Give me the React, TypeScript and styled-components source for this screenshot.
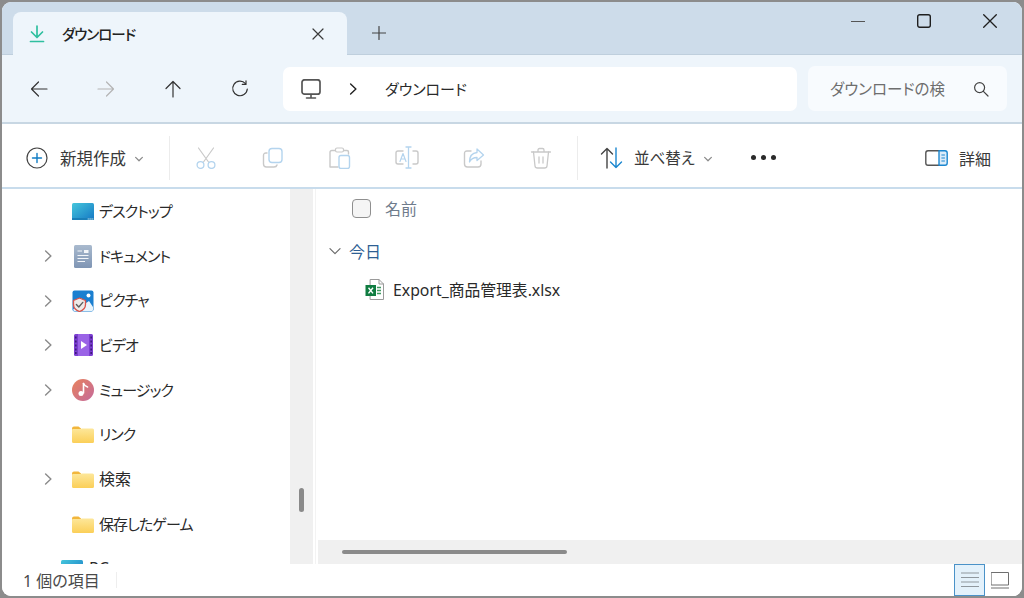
import styled, { createGlobalStyle } from "styled-components";
import { ReactNode } from "react";

const GlobalStyle = createGlobalStyle`
  html, body {
    margin: 0;
    padding: 0;
    background: #8c8c8c;
  }
  body {
    font-family: "Noto Sans", "Noto Sans CJK JP", sans-serif;
    font-feature-settings: "palt";
    color: #1f1f1f;
  }
`;

const BLUE = "#b4d4ee";
const GREY = "#c9c9c9";

const Icon = ({ size = 20, w, h, children }: { size?: number; w?: number; h?: number; children: ReactNode }) => (
  <svg
    width={w ?? size}
    height={h ?? size}
    viewBox={`0 0 ${w ?? size} ${h ?? size}`}
    fill="none"
    strokeLinecap="round"
    strokeLinejoin="round"
    style={{ display: "block", flex: "none" }}
  >
    {children}
  </svg>
);

const Chevron = ({ dir = "right", size = 12, color = "#8a8a8a" }: { dir?: "right" | "down"; size?: number; color?: string }) => (
  <Icon size={size}>
    {dir === "right" ? (
      <path d={`M${size * 0.3} ${size * 0.08}L${size * 0.74} ${size * 0.5}L${size * 0.3} ${size * 0.92}`} stroke={color} strokeWidth="1.4" />
    ) : (
      <path d={`M${size * 0.08} ${size * 0.3}L${size * 0.5} ${size * 0.72}L${size * 0.92} ${size * 0.3}`} stroke={color} strokeWidth="1.2" />
    )}
  </Icon>
);

const FolderIcon = () => (
  <Icon w={22} h={17}>
    <path d="M0 2.5Q0 0.5 2 0.5H6.5L9 2.5V5H0Z" fill="#f2b63c" />
    <path d="M0 4Q0 3 1 3H8.5L10 2.5H20.5Q22 2.5 22 4V15.5Q22 17 20.5 17H1.5Q0 17 0 15.5Z" fill="url(#folderFill)" />
  </Icon>
);

const DesktopIcon = () => (
  <Icon w={22} h={17}>
    <rect width="22" height="17" rx="1.5" fill="url(#desktopFill)" />
    <rect y="15" width="22" height="2" fill="#1a7fb8" />
    <path d="M16 16h1M18 16h1M20 16h1" stroke="#d9f0fa" strokeWidth="0.8" />
  </Icon>
);

const DocumentIcon = () => (
  <Icon w={18} h={23}>
    <rect width="18" height="23" rx="1.5" fill="url(#docFill)" />
    <path d="M3.5 10.5H14.5M3.5 13.5H14.5M3.5 16.5H11" stroke="#f2f5f9" strokeWidth="1" strokeLinecap="butt" />
    <rect x="10" y="5" width="4.5" height="3" fill="#f2f5f9" />
    <path d="M3.5 6H8" stroke="#f2f5f9" strokeWidth="1" strokeLinecap="butt" />
  </Icon>
);

const PictureIcon = () => (
  <Icon size={22}>
    <rect width="21" height="21" x="0.5" y="0.5" rx="2" fill="#1b7fd0" />
    <path d="M1 20L9 8L14 13L17 11L21 17V20Q21 21 20 21H2Z" fill="#e8f4fc" />
    <circle cx="16.5" cy="5.5" r="2" fill="#fff" />
    <path d="M1.5 10.5L7.5 8L13.500 10.5V14.500Q13.500 19.500 7.500 21.500Q1.500 19.500 1.500 14.500Z" fill="#eeeae8" stroke="#d9534a" strokeWidth="1.300" />
    <path d="M4.4 14.600L6.800 17L10.800 12.400" stroke="#5d5d5d" strokeWidth="1.400" />
  </Icon>
);

const VideoIcon = () => (
  <Icon w={19} h={22}>
    <rect width="19" height="22" rx="1.5" fill="#7b3ed0" />
    <rect x="4" y="0" width="11" height="22" fill="#9a63e6" />
    <path d="M1 3.5h1.6M1 7.5h1.6M1 11.5h1.6M1 15.5h1.6M1 19h1.6M16.4 3.5h1.6M16.4 7.5h1.6M16.4 11.5h1.6M16.4 15.5h1.6M16.4 19h1.6" stroke="#3e1a7c" strokeWidth="1.8" strokeLinecap="butt" />
    <path d="M7 7L13 11L7 15Z" fill="#fff" />
  </Icon>
);

const MusicIcon = () => (
  <Icon size={22}>
    <circle cx="11" cy="11" r="11" fill="url(#musicFill)" />
    <path d="M11.5 4.5V14" stroke="#fff" strokeWidth="1.6" />
    <path d="M11.5 4.5Q13 7.5 15.5 8" stroke="#fff" strokeWidth="1.6" />
    <circle cx="9" cy="14.5" r="2.5" fill="#fff" />
  </Icon>
);

const ExcelIcon = () => (
  <Icon w={20} h={21}>
    <path d="M5.5 0.5H14L18.5 5V20.5H5.5Z" fill="#fff" stroke="#9a9a9a" strokeWidth="1" />
    <path d="M14 0.5V5H18.5" stroke="#9a9a9a" strokeWidth="1" />
    <path d="M12 8.5h4M12 11.5h4M12 14.5h4" stroke="#3f9a62" strokeWidth="1.7" strokeLinecap="butt" />
    <rect x="0.5" y="6" width="10.5" height="11" fill="#107c41" />
    <path d="M3.5 8.8L8 14.4M8 8.8L3.5 14.4" stroke="#fff" strokeWidth="1.4" strokeLinecap="butt" />
  </Icon>
);

const places = [
  { label: "デスクトップ", icon: <DesktopIcon /> },
  { label: "ドキュメント", icon: <DocumentIcon />, expand: true },
  { label: "ピクチャ", icon: <PictureIcon />, expand: true },
  { label: "ビデオ", icon: <VideoIcon />, expand: true },
  { label: "ミュージック", icon: <MusicIcon />, expand: true },
  { label: "リンク", icon: <FolderIcon /> },
  { label: "検索", icon: <FolderIcon />, expand: true, kanji: true },
  { label: "保存したゲーム", icon: <FolderIcon /> },
];

export default function App() {
  return (
    <>
      <GlobalStyle />
      <svg width="0" height="0" style={{ position: "absolute" }}>
        <defs>
          <linearGradient id="folderFill" x1="0" y1="0" x2="0" y2="1">
            <stop offset="0" stopColor="#fde79a" />
            <stop offset="1" stopColor="#fbcf58" />
          </linearGradient>
          <linearGradient id="desktopFill" x1="0" y1="0" x2="1" y2="1">
            <stop offset="0" stopColor="#45c6dc" />
            <stop offset="1" stopColor="#1578c4" />
          </linearGradient>
          <linearGradient id="docFill" x1="0" y1="0" x2="0" y2="1">
            <stop offset="0" stopColor="#a9bace" />
            <stop offset="1" stopColor="#7f95b4" />
          </linearGradient>
          <linearGradient id="musicFill" x1="0" y1="0" x2="1" y2="1">
            <stop offset="0" stopColor="#e8825c" />
            <stop offset="1" stopColor="#c46a9c" />
          </linearGradient>
        </defs>
      </svg>
      <Window>
        <TitleBar>
          <Tab>
            <TabIcon>
              <Icon size={18}>
                <path d="M9 1V12M3.5 7L9 12.5L14.5 7" stroke="#2fbf9f" strokeWidth="1.7" />
                <path d="M2.5 16.5H15.5" stroke="#2fbf9f" strokeWidth="1.7" />
              </Icon>
            </TabIcon>
            <TabLabel>ダウンロード</TabLabel>
            <TabClose>
              <Icon size={12}>
                <path d="M1 1L11 11M11 1L1 11" stroke="#3a3a3a" strokeWidth="1.2" />
              </Icon>
            </TabClose>
          </Tab>
          <NewTab>
            <Icon size={14}>
              <path d="M7 .5V13.5M.5 7H13.5" stroke="#444" strokeWidth="1.2" />
            </Icon>
          </NewTab>
          <WindowControls>
            <WindowButton>
              <Icon size={14}>
                <path d="M.5 7.5H13.5" stroke="#555" strokeWidth="1.2" />
              </Icon>
            </WindowButton>
            <WindowButton>
              <Icon size={14}>
                <rect x=".7" y=".7" width="12.6" height="12.6" rx="2" stroke="#1f1f1f" strokeWidth="1.4" />
              </Icon>
            </WindowButton>
            <WindowButton>
              <Icon size={14}>
                <path d="M.7 .7L13.3 13.3M13.3 .7L.7 13.3" stroke="#1f1f1f" strokeWidth="1.3" />
              </Icon>
            </WindowButton>
          </WindowControls>
        </TitleBar>

        <NavBar>
          <NavButton>
            <Icon size={18}>
              <path d="M17 9H1.5M8.5 2L1.5 9L8.5 16" stroke="#333" strokeWidth="1.2" />
            </Icon>
          </NavButton>
          <NavButton>
            <Icon size={18}>
              <path d="M1 9H16.5M9.5 2L16.5 9L9.5 16" stroke="#b4b4b4" strokeWidth="1.2" />
            </Icon>
          </NavButton>
          <NavButton>
            <Icon size={18}>
              <path d="M9 17V1.5M2 8.5L9 1.5L16 8.5" stroke="#333" strokeWidth="1.2" />
            </Icon>
          </NavButton>
          <NavButton>
            <Icon size={18}>
              <path d="M14.5 3.6A7.3 7.3 0 1 0 16.3 9" stroke="#333" strokeWidth="1.2" />
              <path d="M15 .8V4.4H11.3" stroke="#333" strokeWidth="1.2" />
            </Icon>
          </NavButton>
          <AddressBox>
            <Icon w={20} h={20}>
              <rect x="1" y=".8" width="18" height="14.4" rx="2.5" stroke="#555" strokeWidth="1.7" />
              <path d="M10 15.5V18.5M5.500 19H14.500" stroke="#555" strokeWidth="1.6" />
            </Icon>
            <AddressChevron>
              <Chevron size={12} color="#222" />
            </AddressChevron>
            <AddressText>ダウンロード</AddressText>
          </AddressBox>
          <SearchBox>
            <SearchText>ダウンロードの検</SearchText>
            <Icon size={16}>
              <circle cx="6.6" cy="6.6" r="5" stroke="#444" strokeWidth="1.2" />
              <path d="M10.4 10.4L15 15" stroke="#444" strokeWidth="1.2" />
            </Icon>
          </SearchBox>
        </NavBar>

        <Toolbar>
          <NewButton>
            <Icon size={22}>
              <circle cx="11" cy="11" r="10" stroke="#444" strokeWidth="1.2" />
              <path d="M11 6.5V15.5M6.5 11H15.5" stroke="#0f7cc4" strokeWidth="1.4" />
            </Icon>
            <ToolLabel $size={16.5} $gap={12}>新規作成</ToolLabel>
            <MenuChevron>
              <Chevron dir="down" size={8} color="#8a8a8a" />
            </MenuChevron>
          </NewButton>
          <ToolDivider />
          <ToolIconButton>
            <Icon size={22}>
              <path d="M3.5 1L13.5 15M18.5 1L8.5 15" stroke={GREY} strokeWidth="1.2" />
              <circle cx="5.5" cy="18" r="3.4" stroke={BLUE} strokeWidth="1.3" />
              <circle cx="16.5" cy="18" r="3.4" stroke={BLUE} strokeWidth="1.3" />
            </Icon>
          </ToolIconButton>
          <ToolIconButton>
            <Icon size={22}>
              <path d="M5 6H4Q1.5 6 1.5 8.5V17Q1.5 20 4.5 20H12Q14.5 20 15 18" stroke={GREY} strokeWidth="1.4" />
              <rect x="7" y="1.5" width="13" height="14" rx="3" stroke={BLUE} strokeWidth="1.4" />
            </Icon>
          </ToolIconButton>
          <ToolIconButton>
            <Icon size={22}>
              <path d="M6 3.5H3Q1 3.5 1 5.5V20H9" stroke={GREY} strokeWidth="1.4" />
              <path d="M15 3.5H18Q19.5 3.5 19.5 5V7" stroke={GREY} strokeWidth="1.4" />
              <rect x="6.5" y="1" width="8" height="4" rx="1.5" stroke={GREY} strokeWidth="1.2" />
              <rect x="10" y="8.5" width="10.5" height="13" rx="2" stroke={BLUE} strokeWidth="1.4" />
            </Icon>
          </ToolIconButton>
          <ToolIconButton>
            <Icon size={24}>
              <path d="M8 5H3Q1 5 1 7V16Q1 18 3 18H8M18 5H21Q23 5 23 7V16Q23 18 21 18H18" stroke={GREY} strokeWidth="1.4" />
              <path d="M13.5 1V22M11 1H16M11 22H16" stroke={BLUE} strokeWidth="1.3" />
              <path d="M5 15.5L8 7.5L11 15.5M6 13H10" stroke={BLUE} strokeWidth="1.2" />
            </Icon>
          </ToolIconButton>
          <ToolIconButton>
            <Icon size={22}>
              <path d="M8 4H4Q1.5 4 1.5 6.5V17Q1.5 20 4.5 20H15Q18 20 18 17V14" stroke={GREY} strokeWidth="1.4" />
              <path d="M14 2L20.5 8L14 13.5V10.5C10 10.5 8 12 6.5 15C6.5 10 9 6 14 5.5Z" stroke={BLUE} strokeWidth="1.3" />
            </Icon>
          </ToolIconButton>
          <ToolIconButton>
            <Icon size={22}>
              <path d="M1.5 5H20.5M8 5V3Q8 1.5 9.5 1.5H12.5Q14 1.5 14 3V5" stroke={GREY} strokeWidth="1.3" />
              <path d="M3.5 5L5 19Q5.2 21 7.5 21H14.5Q16.8 21 17 19L18.5 5" stroke={GREY} strokeWidth="1.3" />
              <path d="M9 10V16M13 10V16" stroke={GREY} strokeWidth="1.3" />
            </Icon>
          </ToolIconButton>
          <ToolDivider $before={3} />
          <SortButton>
            <Icon size={24}>
              <path d="M7 22V2.5M1.5 8L7 2.5L12.5 8" stroke="#444" strokeWidth="1.4" />
              <path d="M16 2V21.5M10.5 16L16 21.5L21.5 16" stroke="#1a86cf" strokeWidth="1.4" />
            </Icon>
            <ToolLabel $gap={10}>並べ替え</ToolLabel>
            <MenuChevron>
              <Chevron dir="down" size={8} color="#8a8a8a" />
            </MenuChevron>
          </SortButton>
          <MoreDots>
            <Dot />
            <Dot />
            <Dot />
          </MoreDots>
          <DetailsButton>
            <Icon w={23} h={16}>
              <path d="M14 .8H3Q.8 .8 .8 3V13Q.8 15.200 3 15.200H14" stroke="#555" strokeWidth="1.4" />
              <path d="M14 .8H20Q22.200 .8 22.200 3V13Q22.200 15.200 20 15.200H14Z" fill="#dcecf9" stroke="#1a86cf" strokeWidth="1.4" />
              <path d="M16.800 5H19.500M16.800 8H19.500M16.800 11H19.500" stroke="#1a86cf" strokeWidth="1" />
            </Icon>
            <ToolLabel $size={16} $gap={11}>詳細</ToolLabel>
          </DetailsButton>
        </Toolbar>

        <Body>
          <Sidebar>
            {places.map((p) => (
              <TreeRow key={p.label}>
                <TreeChevron>{p.expand && <Chevron size={12} />}</TreeChevron>
                <TreeIcon>{p.icon}</TreeIcon>
                <TreeLabel $kanji={p.kanji}>{p.label}</TreeLabel>
              </TreeRow>
            ))}
            <PcRow>
              <DesktopIcon />
              <TreeLabel $kanji>PC</TreeLabel>
            </PcRow>
          </Sidebar>
          <ScrollTrack>
            <ScrollThumb />
          </ScrollTrack>
          <TrackEdge />
          <Main>
            <FileArea>
              <HeaderRow>
                <CheckBox />
                <HeaderLabel>名前</HeaderLabel>
              </HeaderRow>
              <GroupRow>
                <Chevron dir="down" size={12} color="#6b6b6b" />
                <GroupLabel>今日</GroupLabel>
              </GroupRow>
              <FileRow>
                <ExcelIcon />
                <FileName>Export_商品管理表.xlsx</FileName>
              </FileRow>
            </FileArea>
            <HScroll>
              <HThumb />
            </HScroll>
          </Main>
        </Body>

        <StatusBar>
          <StatusText>1 個の項目</StatusText>
          <StatusDivider />
          <ViewButton $active>
            <Icon w={18} h={16}>
              <path d="M0 1H18M0 5.500H18M0 10H18M0 14.500H18" stroke="#8f979e" strokeWidth="1.2" strokeLinecap="butt" />
            </Icon>
          </ViewButton>
          <ViewButton>
            <Icon w={18} h={17}>
              <rect x=".5" y=".5" width="17" height="12.500" stroke="#6f6f6f" strokeWidth="1" />
              <path d="M0 16H18" stroke="#6f6f6f" strokeWidth="1" />
            </Icon>
          </ViewButton>
        </StatusBar>
      </Window>
    </>
  );
}

const Window = styled.div`
  box-sizing: border-box;
  width: 1020px;
  height: 594px;
  margin: 2px;
  border-radius: 9px;
  overflow: hidden;
  display: flex;
  flex-direction: column;
  background: #fff;
`;

const TitleBar = styled.div`
  height: 53px;
  flex: none;
  background: #cddcea;
  border-bottom: 1px solid #bfcfdd;
  box-sizing: border-box;
  display: flex;
  align-items: flex-end;
  padding-left: 11px;
`;

const Tab = styled.div`
  box-sizing: border-box;
  width: 334px;
  height: 43px;
  margin-bottom: -1px;
  background: #eef5fb;
  border-radius: 8px 8px 0 0;
  display: flex;
  align-items: center;
  padding: 0 23px 0 15px;
`;

const TabIcon = styled.div`
  width: 18px;
  margin-right: 16px;
`;

const TabLabel = styled.span`
  flex: 1;
  font-size: 14.500px;
  font-weight: 500;
  letter-spacing: -1px;
  color: #222;
`;

const TabClose = styled.div`
  width: 12px;
`;

const NewTab = styled.div`
  margin: 0 0 14px 25px;
`;

const WindowControls = styled.div`
  margin-left: auto;
  align-self: flex-start;
  display: flex;
  padding: 12px 25px 0 0;
  gap: 52px;
`;

const WindowButton = styled.div`
  width: 14px;
`;

const NavBar = styled.div`
  box-sizing: border-box;
  height: 69px;
  flex: none;
  background: #eef5fb;
  border-bottom: 2px solid #c8d7e3;
  display: flex;
  align-items: center;
  padding-left: 3.500px;
`;

const NavButton = styled.div`
  width: 67px;
  display: flex;
  justify-content: center;
`;

const AddressBox = styled.div`
  box-sizing: border-box;
  width: 514px;
  height: 44px;
  margin-left: 9.500px;
  background: #fff;
  border-radius: 7px;
  display: flex;
  align-items: center;
  padding-left: 18px;
`;

const AddressChevron = styled.div`
  margin: 0 26px 0 26px;
`;

const AddressText = styled.span`
  font-size: 15px;
  color: #2a2a2a;
`;

const SearchBox = styled.div`
  box-sizing: border-box;
  width: 199px;
  height: 45px;
  margin-left: 11px;
  background: #f8fbfe;
  border-radius: 7px;
  display: flex;
  align-items: center;
  justify-content: space-between;
  padding: 0 18px 0 22px;
`;

const SearchText = styled.span`
  font-size: 15.500px;
  color: #6e6e6e;
`;

const Toolbar = styled.div`
  box-sizing: border-box;
  height: 65px;
  flex: none;
  background: #fff;
  border-bottom: 2px solid #c8dcec;
  display: flex;
  align-items: center;
  padding: 4px 0 0 24px;
`;

const NewButton = styled.div`
  display: flex;
  align-items: center;
  width: 143px;
`;

const ToolLabel = styled.span<{ $size?: number; $gap?: number }>`
  font-size: ${(p) => p.$size ?? 15.5}px;
  color: #3a3a3a;
  margin-left: ${(p) => p.$gap ?? 12}px;
`;

const MenuChevron = styled.div`
  margin: 2px 0 0 9px;
`;

const ToolDivider = styled.div<{ $before?: number }>`
  width: 1px;
  height: 44px;
  background: #ececec;
  margin: 0 2px 0 ${(p) => p.$before ?? 0}px;
`;

const ToolIconButton = styled.div`
  width: 67px;
  display: flex;
  justify-content: center;
`;

const SortButton = styled.div`
  display: flex;
  align-items: center;
  margin-left: 20px;
  width: 151px;
`;

const MoreDots = styled.div`
  display: flex;
  gap: 5px;
`;

const Dot = styled.span`
  width: 5px;
  height: 5px;
  border-radius: 50%;
  background: #2a2a2a;
`;

const DetailsButton = styled.div`
  margin-left: auto;
  display: flex;
  align-items: center;
  padding-right: 31px;
`;

const Body = styled.div`
  flex: 1;
  min-height: 0;
  display: flex;
`;

const Sidebar = styled.nav`
  width: 288px;
  flex: none;
  overflow: hidden;
  display: flex;
  flex-direction: column;
`;

const TreeRow = styled.div`
  height: 44.700px;
  flex: none;
  display: flex;
  align-items: center;
  padding-left: 40px;
`;

const TreeChevron = styled.div`
  width: 12px;
  margin-right: 18px;
`;

const TreeIcon = styled.div`
  width: 22px;
  display: flex;
  justify-content: center;
  margin-right: 5px;
`;

const TreeLabel = styled.span<{ $kanji?: boolean }>`
  font-size: ${(p) => (p.$kanji ? "16px" : "15px")};
  letter-spacing: ${(p) => (p.$kanji ? "0" : "-0.9px")};
  color: #2a2a2a;
  margin-top: -2px;
`;

const PcRow = styled.div`
  height: 44px;
  flex: none;
  display: flex;
  align-items: center;
  gap: 6px;
  padding-left: 59px;
`;

const ScrollTrack = styled.div`
  width: 23px;
  flex: none;
  background: #f0f0f0;
  padding-top: 299px;
  box-sizing: border-box;
`;

const ScrollThumb = styled.div`
  width: 5px;
  height: 24px;
  margin-left: 9px;
  border-radius: 3px;
  background: #8a8a8a;
`;

const TrackEdge = styled.div`
  width: 1px;
  margin: 0 2px;
  flex: none;
  background: #f3f3f3;
`;

const Main = styled.main`
  flex: 1;
  min-width: 0;
  display: flex;
  flex-direction: column;
`;

const FileArea = styled.div`
  flex: 1;
  min-height: 0;
`;

const HeaderRow = styled.div`
  height: 39px;
  display: flex;
  align-items: center;
  padding-left: 34px;
`;

const CheckBox = styled.div`
  box-sizing: border-box;
  width: 19px;
  height: 19px;
  border: 1.500px solid #8f8f8f;
  border-radius: 4px;
  background: #f5f5f5;
`;

const HeaderLabel = styled.span`
  font-size: 16px;
  color: #6f7c8c;
  margin: -2px 0 0 14px;
`;

const GroupRow = styled.div`
  height: 45px;
  display: flex;
  align-items: center;
  padding-left: 11px;
`;

const GroupLabel = styled.span`
  font-size: 16px;
  color: #2f5f94;
  margin-left: 8px;
`;

const FileRow = styled.div`
  height: 32px;
  display: flex;
  align-items: center;
  padding-left: 47px;
`;

const FileName = styled.span`
  font-size: 15.800px;
  color: #2a2a2a;
  margin-left: 8px;
`;

const HScroll = styled.div`
  height: 24px;
  flex: none;
  background: #f0f0f0;
  display: flex;
  align-items: center;
  padding-left: 24px;
`;

const HThumb = styled.div`
  width: 225px;
  height: 4px;
  border-radius: 2px;
  background: #8a8a8a;
`;

const StatusBar = styled.div`
  height: 32px;
  flex: none;
  background: #fff;
  display: flex;
  align-items: center;
  padding: 0 9px 0 21px;
`;

const StatusText = styled.span`
  font-size: 16px;
  color: #4a4a4a;
`;

const StatusDivider = styled.div`
  width: 1px;
  height: 16px;
  background: #eeeeee;
  margin: 0 auto 0 16px;
`;

const ViewButton = styled.div<{ $active?: boolean }>`
  box-sizing: border-box;
  width: ${(p) => (p.$active ? "31px" : "26px")};
  height: 32px;
  margin-right: ${(p) => (p.$active ? "2px" : "0")};
  display: flex;
  align-items: center;
  justify-content: center;
  background: ${(p) => (p.$active ? "#e3f1fb" : "transparent")};
  border: ${(p) => (p.$active ? "1px solid #4a92c8" : "none")};
`;
